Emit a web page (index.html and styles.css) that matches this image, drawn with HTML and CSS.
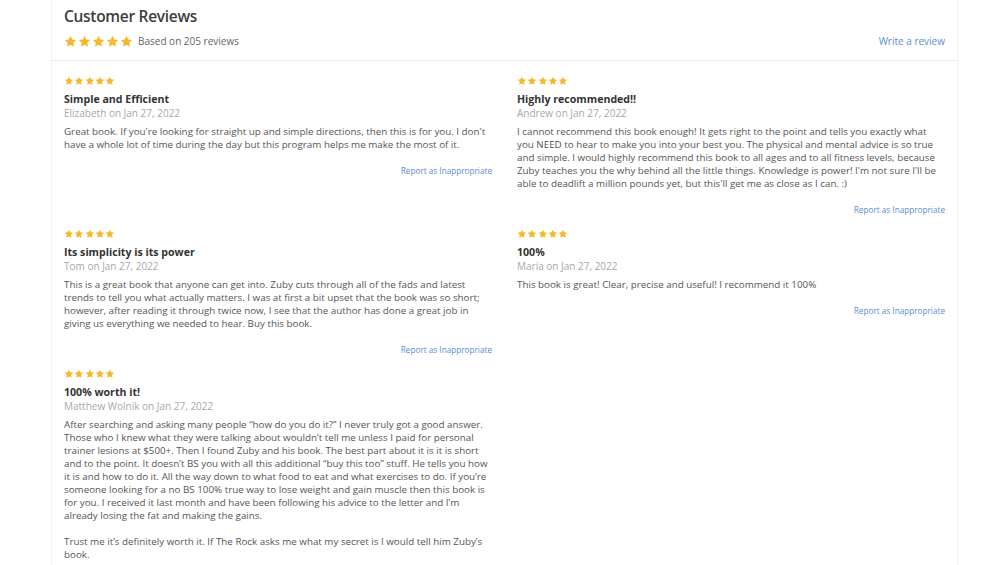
FILE: index.html
```html
<!DOCTYPE html>
<html lang="en">
<head>
<meta charset="utf-8">
<title>Customer Reviews</title>
<link rel="stylesheet" href="styles.css">
</head>
<body>
<svg width="0" height="0" class="defs" aria-hidden="true">
  <defs>
    <symbol id="star" viewBox="0 0 24 24">
      <path d="M12 1.6l3.2 6.6 7.2 1-5.2 5.1 1.3 7.2L12 18.1l-6.5 3.4 1.3-7.2L1.6 9.2l7.2-1z" fill="currentColor"/>
    </symbol>
  </defs>
</svg>
<section class="reviews-card">
  <header class="reviews-header">
    <h2 class="reviews-title">Customer Reviews</h2>
    <div class="summary-row">
      <div class="summary-left">
        <span class="stars stars-lg">
          <svg><use href="#star"/></svg><svg><use href="#star"/></svg><svg><use href="#star"/></svg><svg><use href="#star"/></svg><svg><use href="#star"/></svg>
        </span>
        <span class="summary-text">Based on 205 reviews</span>
      </div>
      <a class="write-link" href="#">Write a review</a>
    </div>
  </header>

  <div class="reviews-grid">
    <article class="review">
      <span class="stars stars-sm"><svg><use href="#star"/></svg><svg><use href="#star"/></svg><svg><use href="#star"/></svg><svg><use href="#star"/></svg><svg><use href="#star"/></svg></span>
      <h3 class="review-title">Simple and Efficient</h3>
      <div class="review-author">Elizabeth on Jan 27, 2022</div>
      <p class="review-body">Great book. If you're looking for straight up and simple directions, then this is for you. I don't have a whole lot of time during the day but this program helps me make the most of it.</p>
      <a class="report-link" href="#">Report as Inappropriate</a>
    </article>

    <article class="review">
      <span class="stars stars-sm"><svg><use href="#star"/></svg><svg><use href="#star"/></svg><svg><use href="#star"/></svg><svg><use href="#star"/></svg><svg><use href="#star"/></svg></span>
      <h3 class="review-title">Highly recommended!!</h3>
      <div class="review-author">Andrew on Jan 27, 2022</div>
      <p class="review-body">I cannot recommend this book enough! It gets right to the point and tells you exactly what you NEED to hear to make you into your best you. The physical and mental advice is so true and simple. I would highly recommend this book to all ages and to all fitness levels, because Zuby teaches you the why behind all the little things. Knowledge is power! I'm not sure I'll be able to deadlift a million pounds yet, but this'll get me as close as I can. :)</p>
      <a class="report-link" href="#">Report as Inappropriate</a>
    </article>

    <article class="review">
      <span class="stars stars-sm"><svg><use href="#star"/></svg><svg><use href="#star"/></svg><svg><use href="#star"/></svg><svg><use href="#star"/></svg><svg><use href="#star"/></svg></span>
      <h3 class="review-title">Its simplicity is its power</h3>
      <div class="review-author">Tom on Jan 27, 2022</div>
      <p class="review-body">This is a great book that anyone can get into. Zuby cuts through all of the fads and latest trends to tell you what actually matters. I was at first a bit upset that the book was so short; however, after reading it through twice now, I see that the author has done a great job in giving us everything we needed to hear. Buy this book.</p>
      <a class="report-link" href="#">Report as Inappropriate</a>
    </article>

    <article class="review">
      <span class="stars stars-sm"><svg><use href="#star"/></svg><svg><use href="#star"/></svg><svg><use href="#star"/></svg><svg><use href="#star"/></svg><svg><use href="#star"/></svg></span>
      <h3 class="review-title">100%</h3>
      <div class="review-author">María on Jan 27, 2022</div>
      <p class="review-body">This book is great! Clear, precise and useful! I recommend it 100%</p>
      <a class="report-link" href="#">Report as Inappropriate</a>
    </article>

    <article class="review">
      <span class="stars stars-sm"><svg><use href="#star"/></svg><svg><use href="#star"/></svg><svg><use href="#star"/></svg><svg><use href="#star"/></svg><svg><use href="#star"/></svg></span>
      <h3 class="review-title">100% worth it!</h3>
      <div class="review-author">Matthew Wolnik on Jan 27, 2022</div>
      <p class="review-body">After searching and asking many people “how do you do it?” I never truly got a good answer. Those who I knew what they were talking about wouldn’t tell me unless I paid for personal trainer lesions at $500+. Then I found Zuby and his book. The best part about it is it is short and to the point. It doesn’t BS you with all this additional “buy this too” stuff. He tells you how it is and how to do it. All the way down to what food to eat and what exercises to do. If you’re someone looking for a no BS 100% true way to lose weight and gain muscle then this book is for you. I received it last month and have been following his advice to the letter and I’m already losing the fat and making the gains.<br><br>Trust me it’s definitely worth it. If The Rock asks me what my secret is I would tell him Zuby’s book.</p>
      <a class="report-link" href="#">Report as Inappropriate</a>
    </article>
  </div>
</section>
</body>
</html>
```

FILE: styles.css
```css
* { box-sizing: border-box; }

html, body {
  margin: 0;
  padding: 0;
  background: #ffffff;
}

body {
  font-family: "Open Sans", "Liberation Sans", sans-serif;
  color: #555;
}

.defs {
  position: absolute;
  width: 0;
  height: 0;
  overflow: hidden;
}

.reviews-card {
  width: 907px;
  margin-left: 51px;
  border-left: 1px solid #f2f2f2;
  border-right: 1px solid #f2f2f2;
  min-height: 565px;
}

.reviews-header {
  padding: 6px 12px 12px 12px;
  border-bottom: 1px solid #ebebeb;
}

.reviews-title {
  margin: 0;
  font-size: 15.5px;
  line-height: 20px;
  font-weight: 600;
  letter-spacing: -0.3px;
  color: #3d3d3d;
}

.summary-row {
  margin-top: 8px;
  height: 14px;
  display: flex;
  align-items: center;
  justify-content: space-between;
}

.summary-left {
  display: flex;
  align-items: center;
  gap: 5px;
}

.stars {
  display: flex;
  color: #f6b92e;
}

.stars-lg { gap: 1px; }
.stars-lg svg { width: 13px; height: 13px; display: block; }

.stars-sm { gap: 0.5px; height: 10px; align-items: center; }
.stars-sm svg { width: 9.8px; height: 9.8px; display: block; }

.summary-text {
  font-size: 10px;
  color: #666;
}

.write-link {
  font-size: 10px;
  color: #5a8ed0;
  text-decoration: none;
}

.reviews-grid {
  display: grid;
  grid-template-columns: 1fr 1fr;
  column-gap: 25px;
  row-gap: 13px;
  padding: 15px 12px 0 12px;
  align-items: start;
}

.review {
  display: flex;
  flex-direction: column;
}

.review-title {
  margin: 6px 0 0 0;
  font-size: 10.6px;
  line-height: 14px;
  font-weight: 700;
  color: #333;
}

.review-author {
  font-size: 10px;
  line-height: 14px;
  color: #a8a8a8;
  margin-bottom: 5px;
}

.review-body {
  margin: 0;
  font-size: 9.8px;
  line-height: 13px;
  color: #555;
}

.report-link {
  align-self: flex-end;
  margin-top: 14px;
  font-size: 8.2px;
  line-height: 12px;
  color: #5a8ed0;
  text-decoration: none;
}
```
